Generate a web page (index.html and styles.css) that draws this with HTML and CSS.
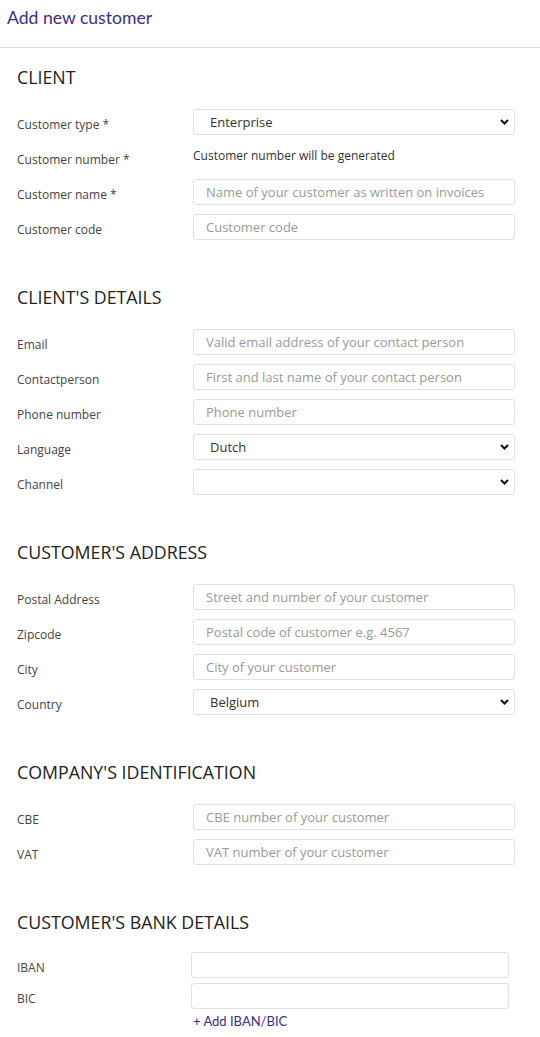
FILE: index.html
```html
<!DOCTYPE html>
<html lang="en">
<head>
<meta charset="utf-8">
<title>Add new customer</title>
<link rel="stylesheet" href="styles.css">
</head>
<body>
<header class="page-header">
  <h1 class="page-title">Add new customer</h1>
</header>

<form class="customer-form">
  <section class="form-section">
    <h2 class="section-title">CLIENT</h2>
    <div class="rows">
      <label class="field-label">Customer type *</label>
      <div class="select-wrap">
        <select class="control select"><option>Enterprise</option></select>
        <span class="chevron"><svg width="9" height="6" viewBox="0 0 9 6"><path d="M1 1 L4.5 4.5 L8 1" fill="none" stroke="#111" stroke-width="2"/></svg></span>
      </div>
      <label class="field-label">Customer number *</label>
      <div class="static-text">Customer number will be generated</div>
      <label class="field-label">Customer name *</label>
      <input class="control" type="text" placeholder="Name of your customer as written on invoices">
      <label class="field-label">Customer code</label>
      <input class="control" type="text" placeholder="Customer code">
    </div>
  </section>

  <section class="form-section">
    <h2 class="section-title">CLIENT'S DETAILS</h2>
    <div class="rows">
      <label class="field-label">Email</label>
      <input class="control" type="text" placeholder="Valid email address of your contact person">
      <label class="field-label">Contactperson</label>
      <input class="control" type="text" placeholder="First and last name of your contact person">
      <label class="field-label">Phone number</label>
      <input class="control" type="text" placeholder="Phone number">
      <label class="field-label">Language</label>
      <div class="select-wrap">
        <select class="control select"><option>Dutch</option></select>
        <span class="chevron"><svg width="9" height="6" viewBox="0 0 9 6"><path d="M1 1 L4.5 4.5 L8 1" fill="none" stroke="#111" stroke-width="2"/></svg></span>
      </div>
      <label class="field-label">Channel</label>
      <div class="select-wrap">
        <select class="control select"><option></option></select>
        <span class="chevron"><svg width="9" height="6" viewBox="0 0 9 6"><path d="M1 1 L4.5 4.5 L8 1" fill="none" stroke="#111" stroke-width="2"/></svg></span>
      </div>
    </div>
  </section>

  <section class="form-section">
    <h2 class="section-title">CUSTOMER'S ADDRESS</h2>
    <div class="rows">
      <label class="field-label">Postal Address</label>
      <input class="control" type="text" placeholder="Street and number of your customer">
      <label class="field-label">Zipcode</label>
      <input class="control" type="text" placeholder="Postal code of customer e.g. 4567">
      <label class="field-label">City</label>
      <input class="control" type="text" placeholder="City of your customer">
      <label class="field-label">Country</label>
      <div class="select-wrap">
        <select class="control select"><option>Belgium</option></select>
        <span class="chevron"><svg width="9" height="6" viewBox="0 0 9 6"><path d="M1 1 L4.5 4.5 L8 1" fill="none" stroke="#111" stroke-width="2"/></svg></span>
      </div>
    </div>
  </section>

  <section class="form-section">
    <h2 class="section-title">COMPANY'S IDENTIFICATION</h2>
    <div class="rows">
      <label class="field-label">CBE</label>
      <input class="control" type="text" placeholder="CBE number of your customer">
      <label class="field-label">VAT</label>
      <input class="control" type="text" placeholder="VAT number of your customer">
    </div>
  </section>

  <section class="form-section bank-section">
    <h2 class="section-title">CUSTOMER'S BANK DETAILS</h2>
    <div class="rows bank-rows">
      <label class="field-label">IBAN</label>
      <input class="control" type="text">
      <label class="field-label">BIC</label>
      <input class="control" type="text">
    </div>
    <a class="add-link" href="#">+ Add IBAN/BIC</a>
  </section>
</form>
</body>
</html>
```

FILE: styles.css
```css
* { box-sizing: border-box; }

body {
  margin: 0;
  background: #ffffff;
  font-family: "Open Sans", "Liberation Sans", sans-serif;
  color: #333333;
}

.page-header {
  height: 48px;
  border-bottom: 1px solid #dddddd;
  padding: 6px 7px 0;
}

.page-title {
  margin: 0;
  font-family: Lato, "Open Sans", sans-serif;
  font-weight: 400;
  font-size: 17.6px;
  line-height: 24px;
  color: #3b2e84;
}

.customer-form {
  margin: 0;
}

.form-section {
  padding: 18px 25px 28px 17px;
}

.section-title {
  margin: 0 0 20px;
  font-weight: 400;
  font-size: 17.8px;
  line-height: 23px;
  color: #222222;
}

.rows {
  display: grid;
  grid-template-columns: 176px 1fr;
  grid-auto-rows: 26px;
  row-gap: 9px;
  align-items: center;
}

.field-label {
  font-size: 12px;
  line-height: 18px;
  padding-top: 6px;
  color: #444444;
}

.static-text {
  align-self: start;
  padding-top: 3px;
  font-size: 12px;
  line-height: 18px;
  color: #333333;
}

.control {
  display: block;
  width: 100%;
  height: 26px;
  margin: 0;
  border: 1px solid #e1e1e1;
  border-radius: 3px;
  background: #ffffff;
  padding: 0 12px;
  font-family: "Open Sans", "Liberation Sans", sans-serif;
  font-size: 13px;
  color: #333333;
  outline: none;
}

.control::placeholder {
  color: #9a9a9a;
}

.select-wrap {
  position: relative;
}

.select {
  appearance: none;
  -webkit-appearance: none;
  padding-left: 16px;
}

.chevron {
  position: absolute;
  right: 6px;
  top: 10px;
  width: 9px;
  height: 6px;
  pointer-events: none;
}

.chevron svg {
  display: block;
}

.bank-section .section-title {
  margin-bottom: 18px;
}

.bank-rows {
  grid-template-columns: 174px 318px;
  row-gap: 5px;
}

.add-link {
  display: block;
  margin: 3px 0 0 176px;
  font-family: Lato, "Open Sans", sans-serif;
  font-size: 13px;
  line-height: 18px;
  color: #3b2e84;
  text-decoration: none;
}
```
